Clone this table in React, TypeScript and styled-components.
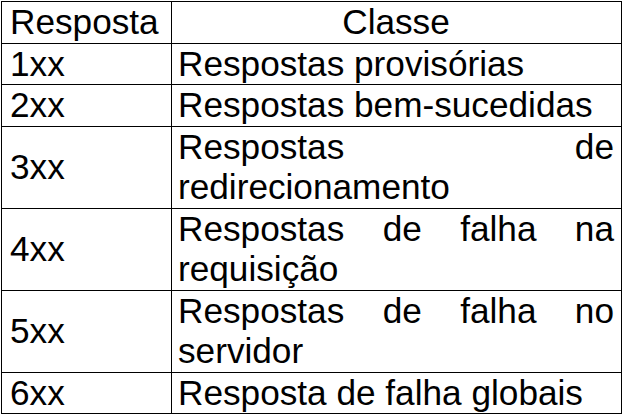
import React from "react";
import styled, { createGlobalStyle } from "styled-components";

const GlobalStyle = createGlobalStyle`
  html, body {
    margin: 0;
    padding: 0;
    background: #ffffff;
  }
  body {
    font-family: "Liberation Sans", Arial, sans-serif;
    color: #000000;
  }
`;

const Table = styled.div`
  display: grid;
  grid-template-columns: 170px 450px;
  width: 620px;
  margin: 1px 0 0 1px;
  border-left: 1px solid #000;
  border-top: 1px solid #000;
  font-family: "Liberation Sans", Arial, sans-serif;
  font-size: 35.2px;
  line-height: 40.5px;
  color: #000;
`;

type Align = "left" | "center" | "justify";

const Cell = styled.div<{ $align?: Align; $first?: boolean }>`
  display: flex;
  flex-direction: column;
  justify-content: center;
  border-right: 1px solid #000;
  border-bottom: 1px solid #000;
  padding: 0 ${(p) => (p.$first ? "6px" : "7px")} 0 ${(p) => (p.$first ? "8px" : "6px")};
  text-align: ${(p) => p.$align ?? "left"};
  text-align-last: ${(p) => (p.$align === "center" ? "center" : "left")};
  white-space: normal;
`;

const rows: { code: string; label: string }[] = [
  { code: "1xx", label: "Respostas provisórias" },
  { code: "2xx", label: "Respostas bem-sucedidas" },
  { code: "3xx", label: "Respostas de redirecionamento" },
  { code: "4xx", label: "Respostas de falha na requisição" },
  { code: "5xx", label: "Respostas de falha no servidor" },
  { code: "6xx", label: "Resposta de falha globais" },
];

export default function App() {
  return (
    <>
      <GlobalStyle />
      <Table role="table">
        <Cell $first role="columnheader">Resposta</Cell>
        <Cell $align="center" role="columnheader">Classe</Cell>
        {rows.map((r) => (
          <React.Fragment key={r.code}>
            <Cell $first role="cell">{r.code}</Cell>
            <Cell $align="justify" role="cell">{r.label}</Cell>
          </React.Fragment>
        ))}
      </Table>
    </>
  );
}
